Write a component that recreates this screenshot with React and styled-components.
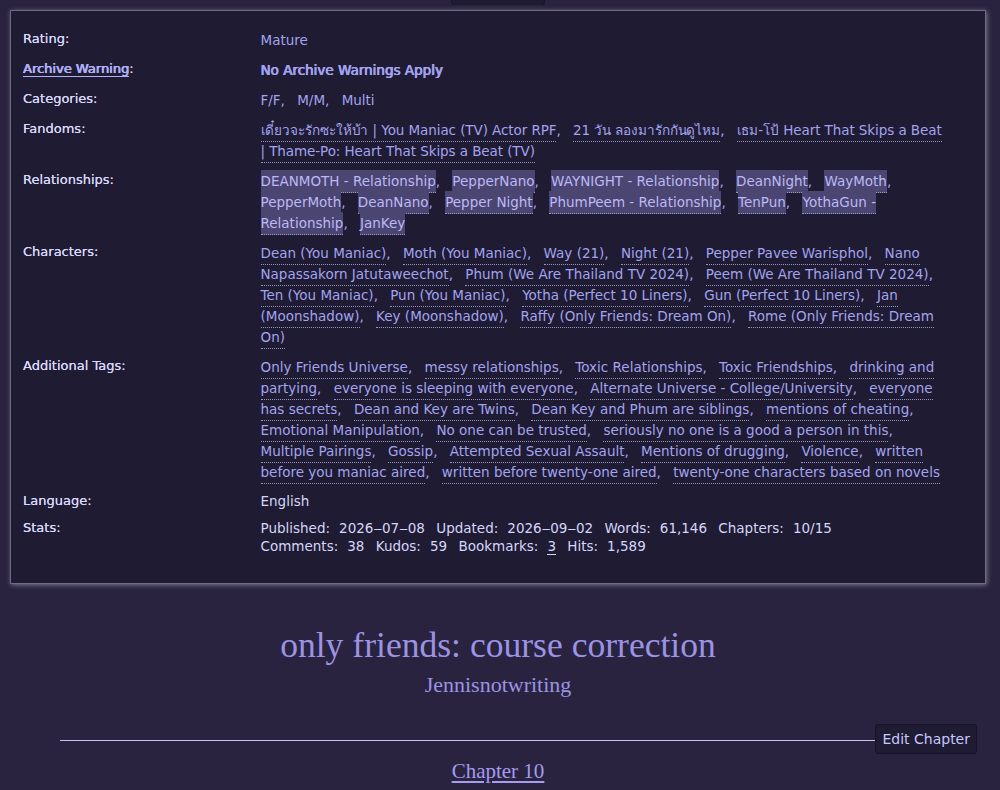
import React from 'react'
import styled, { createGlobalStyle } from 'styled-components'

const GlobalStyle = createGlobalStyle`
    html, body {
        margin: 0;
        padding: 0;
        background: #29233f;
    }
    body {
        font-family: "DejaVu Sans", "Noto Sans", sans-serif;
        font-size: 13px;
        color: #d4d4f7;
    }
`

const fandoms = [
    'เดี๋ยวจะรักซะให้บ้า | You Maniac (TV) Actor RPF',
    '21 วัน ลองมารักกันดูไหม',
    'เธม-โป้ Heart That Skips a Beat | Thame-Po: Heart That Skips a Beat (TV)',
]

const relationships = [
    'DEANMOTH - Relationship', 'PepperNano', 'WAYNIGHT - Relationship', 'DeanNight',
    'WayMoth', 'PepperMoth', 'DeanNano', 'Pepper Night', 'PhumPeem - Relationship',
    'TenPun', 'YothaGun - Relationship', 'JanKey',
]

const characters = [
    'Dean (You Maniac)', 'Moth (You Maniac)', 'Way (21)', 'Night (21)',
    'Pepper Pavee Warisphol', 'Nano Napassakorn Jatutaweechot',
    'Phum (We Are Thailand TV 2024)', 'Peem (We Are Thailand TV 2024)',
    'Ten (You Maniac)', 'Pun (You Maniac)', 'Yotha (Perfect 10 Liners)',
    'Gun (Perfect 10 Liners)', 'Jan (Moonshadow)', 'Key (Moonshadow)',
    'Raffy (Only Friends: Dream On)', 'Rome (Only Friends: Dream On)',
]

const tags = [
    'Only Friends Universe', 'messy relationships', 'Toxic Relationships',
    'Toxic Friendships', 'drinking and partying', 'everyone is sleeping with everyone',
    'Alternate Universe - College/University', 'everyone has secrets',
    'Dean and Key are Twins', 'Dean Key and Phum are siblings', 'mentions of cheating',
    'Emotional Manipulation', 'No one can be trusted',
    'seriously no one is a good a person in this', 'Multiple Pairings', 'Gossip',
    'Attempted Sexual Assault', 'Mentions of drugging', 'Violence',
    'written before you maniac aired', 'written before twenty-one aired',
    'twenty-one characters based on novels',
]

const stats = [
    ['Published', '2026‒07‒08'],
    ['Updated', '2026‒09‒02'],
    ['Words', '61,146'],
    ['Chapters', '10/15'],
    ['Comments', '38'],
    ['Kudos', '59'],
    ['Bookmarks', '3', true],
    ['Hits', '1,589'],
]

const TagList = ({ items, plain, highlight, strong, tight }) => (
    <Tags $tight={tight}>
        {items.map((t, i) => (
            <TagItem key={i}>
                <Tag $plain={plain} $highlight={highlight} $strong={strong}>{t}</Tag>
            </TagItem>
        ))}
    </Tags>
)

const App = () => {
    return (
        <Page>
            <GlobalStyle />
            <TopNav>
                <NavButton />
            </TopNav>
            <MetaBox>
                <Label>Rating:</Label>
                <Value><TagList items={['Mature']} plain /></Value>

                <Label><WarningLink>Archive Warning</WarningLink>:</Label>
                <Value><TagList items={['No Archive Warnings Apply']} plain strong /></Value>

                <Label>Categories:</Label>
                <Value><TagList items={['F/F', 'M/M', 'Multi']} plain /></Value>

                <Label>Fandoms:</Label>
                <Value><TagList items={fandoms} tight /></Value>

                <Label>Relationships:</Label>
                <Value><TagList items={relationships} highlight /></Value>

                <Label>Characters:</Label>
                <Value><TagList items={characters} /></Value>

                <Label>Additional Tags:</Label>
                <Value><TagList items={tags} /></Value>

                <Label $compact>Language:</Label>
                <PlainValue>English</PlainValue>

                <Label $compact>Stats:</Label>
                <PlainValue>
                    <Stats>
                        {stats.map(([k, v, link]) => (
                            <React.Fragment key={k}>
                                <StatPair>
                                    <StatKey>{k}:</StatKey>
                                    <StatValue>{link ? <StatLink>{v}</StatLink> : v}</StatValue>
                                </StatPair>{' '}
                            </React.Fragment>
                        ))}
                    </Stats>
                </PlainValue>
            </MetaBox>

            <Preface>
                <Title>only friends: course correction</Title>
                <Byline>Jennisnotwriting</Byline>
            </Preface>

            <ChapterBar>
                <Rule />
                <EditButton>Edit Chapter</EditButton>
            </ChapterBar>

            <ChapterTitle>
                <ChapterLink>Chapter 10</ChapterLink>
            </ChapterTitle>
        </Page>
    )
}

const Page = styled.div`
    padding: 0 14px 0 10px;
    min-height: 790px;
    box-sizing: border-box;
`

const TopNav = styled.div`
    display: flex;
    justify-content: center;
    height: 5px;
    overflow: hidden;
    margin-bottom: 5px;
`

const NavButton = styled.div`
    width: 92px;
    height: 30px;
    margin-top: -26px;
    background: #1e1b33;
    border: 1px solid #17142a;
    border-radius: 4px;
`

const MetaBox = styled.dl`
    display: grid;
    grid-template-columns: 25% 72%;
    row-gap: 9px;
    align-items: start;
    margin: 0;
    padding: 19px 12px 28px;
    background: #1e1b33;
    border: 1px solid #6f6a88;
    box-shadow: 1px 1px 5px rgba(190, 190, 200, 0.55);
`

const Label = styled.dt`
    margin: 0;
    line-height: ${p => p.$compact ? '18px' : '17px'};
    color: #d8d8fb;
    text-shadow: 0 0 0.5px #d8d8fb;
`

const WarningLink = styled.span`
    color: #b0b0f4;
    text-shadow: 0.5px 0 0 #b0b0f4, -0.2px 0 0 #b0b0f4;
    border-bottom: 1px solid #b0b0f4;
`

const Value = styled.dd`
    margin: 0;
    font-size: 13.5px;
    line-height: 21px;
`

const PlainValue = styled.dd`
    margin: 0;
    font-size: 13.5px;
    line-height: 18px;
    color: #d6d6f9;
`

const Tags = styled.ul`
    list-style: none;
    margin: 0;
    padding: 0;
    display: inline;
    letter-spacing: ${p => p.$tight ? '-0.08px' : 'normal'};
`

const TagItem = styled.li`
    display: inline;
    color: #a3a3ee;
    &:not(:last-child)::after {
        content: ", ";
        margin-right: 8px;
    }
`

const Tag = styled.a`
    text-decoration: none;
    padding: 3px 0;
    border-bottom: 1px dotted ${p => p.$plain ? 'transparent' : '#9595c8'};
    background: ${p => p.$highlight ? '#4b4571' : 'transparent'};
    color: ${p => p.$highlight ? '#bcb9f6' : '#a3a3ee'};
    text-shadow: ${p => p.$strong ? '0.5px 0 0 #a3a3ee, -0.3px 0 0 #a3a3ee' : 'none'};
`

const Stats = styled.dl`
    margin: 0;
    display: inline;
`

const StatPair = styled.span`
    white-space: nowrap;
    margin-right: 7px;
`

const StatKey = styled.dt`
    display: inline;
    margin-right: 9px;
`

const StatValue = styled.dd`
    display: inline;
    margin: 0;
`

const StatLink = styled.a`
    color: #d6d6f9;
    border-bottom: 1px solid #d6d6f9;
`

const Preface = styled.div`
    margin-top: 41px;
    text-align: center;
    font-family: "Liberation Serif", "DejaVu Serif", serif;
    color: #9b93e3;
`

const Title = styled.h2`
    margin: 0;
    font-size: 35.6px;
    font-weight: normal;
    line-height: 40px;
`

const Byline = styled.h3`
    margin: 0;
    font-size: 22px;
    font-weight: normal;
    line-height: 40px;
`

const ChapterBar = styled.div`
    display: flex;
    align-items: center;
    margin: 19px 9px 0 50px;
`

const Rule = styled.div`
    flex: 1;
    height: 1px;
    background: #c8c0f0;
    margin-top: 3px;
`

const EditButton = styled.button`
    font-family: "DejaVu Sans", sans-serif;
    font-size: 14px;
    color: #c8c8fa;
    background: #1e1b33;
    border: 1px solid #16132a;
    border-radius: 3px;
    padding: 0 6px;
    height: 30px;
`

const ChapterTitle = styled.h3`
    margin: 2px 0 0;
    text-align: center;
    font-family: "Liberation Serif", "DejaVu Serif", serif;
    font-size: 21px;
    font-weight: normal;
    line-height: 30px;
`

const ChapterLink = styled.a`
    color: #a59cf0;
    text-decoration: underline;
    text-underline-offset: 3px;
`

export default App
